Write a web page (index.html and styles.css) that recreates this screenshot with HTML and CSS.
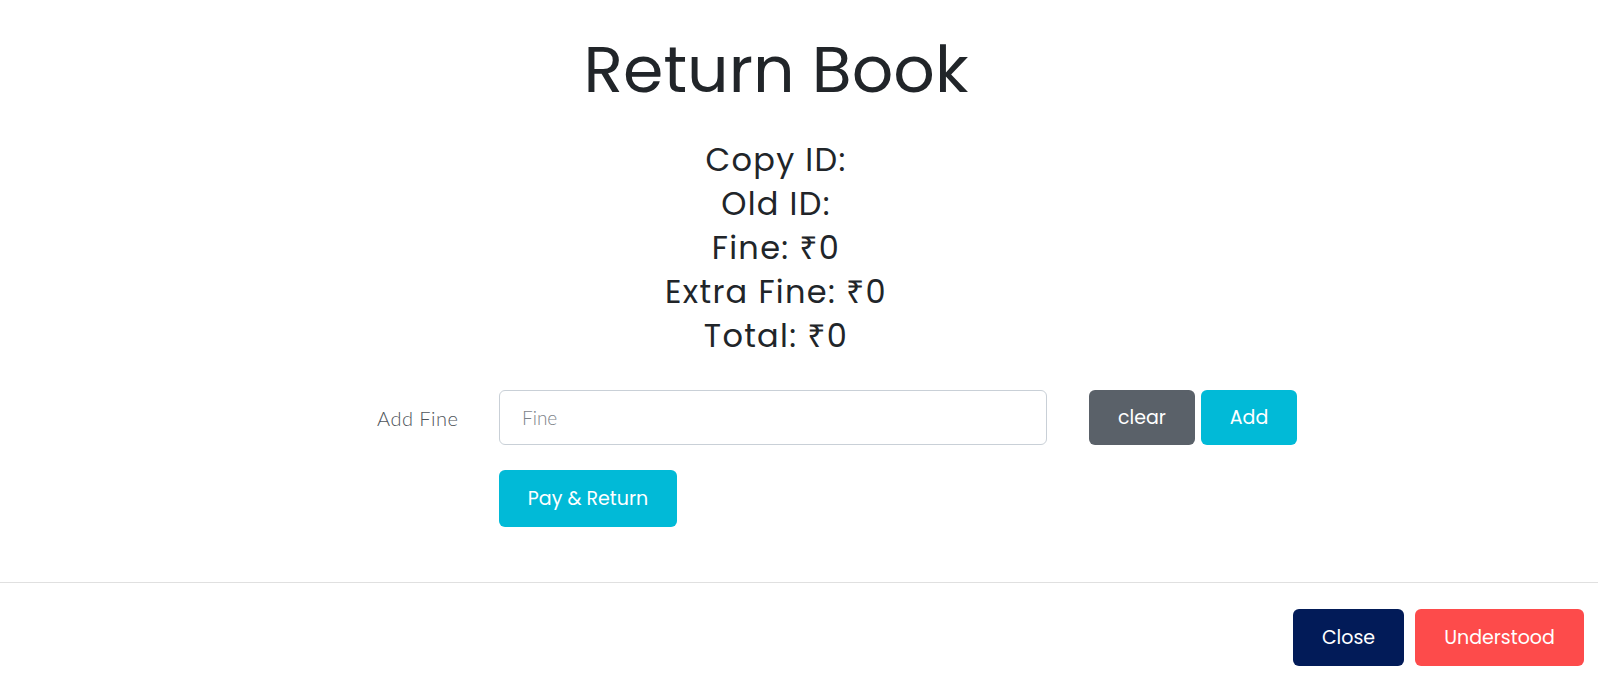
FILE: index.html
```html
<!DOCTYPE html>
<html lang="en">
<head>
<meta charset="utf-8">
<title>Return Book</title>
<link rel="stylesheet" href="styles.css">
</head>
<body>
<div class="modal">
  <div class="modal-body">
    <h1 class="title">Return Book</h1>
    <div class="info">
      <div class="info-line">Copy ID:</div>
      <div class="info-line">Old ID:</div>
      <div class="info-line">Fine: <span class="rupee">₹</span>0</div>
      <div class="info-line">Extra Fine: <span class="rupee">₹</span>0</div>
      <div class="info-line">Total: <span class="rupee">₹</span>0</div>
    </div>
    <form class="fine-form">
      <label class="fine-label" for="fine">Add Fine</label>
      <input class="fine-input" id="fine" type="text" placeholder="Fine">
      <div class="fine-actions">
        <button type="button" class="btn btn-clear">clear</button>
        <button type="button" class="btn btn-add">Add</button>
      </div>
      <div class="pay-cell">
        <button type="button" class="btn btn-pay">Pay &amp; Return</button>
      </div>
    </form>
  </div>
  <div class="modal-footer">
    <button type="button" class="btn btn-close">Close</button>
    <button type="button" class="btn btn-understood">Understood</button>
  </div>
</div>
</body>
</html>
```
FILE: styles.css
```css
* { box-sizing: border-box; }

html, body {
  margin: 0;
  padding: 0;
  background: #ffffff;
}

body {
  font-family: "Poppins", "Inter", "Noto Sans", "DejaVu Sans", sans-serif;
  color: #212529;
  width: 1598px;
  height: 680px;
  overflow: hidden;
}

.modal {
  display: flex;
  flex-direction: column;
}

.modal-body {
  padding: 32px 46px 55px 0;
}

.title {
  margin: 0;
  font-size: 65px;
  font-weight: 400;
  line-height: 76px;
  text-align: center;
}

.info {
  margin-top: 30px;
  text-align: center;
}

.info-line {
  height: 44px;
  font-size: 32px;
  font-weight: 400;
  line-height: 44px;
  letter-spacing: 1.3px;
}

.rupee {
  font-family: "Noto Sans", "DejaVu Sans", sans-serif;
  font-weight: 400;
  line-height: 0;
}

.fine-form {
  margin: 32px 0 0 377px;
  display: grid;
  grid-template-columns: 122px 548px auto;
  column-gap: 0;
  row-gap: 25px;
  align-items: center;
}

.fine-label {
  font-family: "Lato", "Open Sans", sans-serif;
  font-weight: 300;
  font-size: 20px;
  color: #4f555b;
  letter-spacing: 0.5px;
}

.fine-input {
  height: 55px;
  width: 548px;
  border: 1px solid #c9d0d7;
  border-radius: 6px;
  padding: 0 22px;
  font-family: "Lato", "Open Sans", sans-serif;
  font-weight: 300;
  font-size: 19px;
  color: #495057;
  outline: none;
}

.fine-input::placeholder {
  color: #7d838a;
}

.fine-actions {
  display: flex;
  gap: 6px;
  padding-left: 42px;
}

.pay-cell {
  grid-column: 2;
}

.btn {
  border: none;
  border-radius: 6px;
  color: #ffffff;
  font-family: "Poppins", "Inter", sans-serif;
  font-size: 19px;
  font-weight: 400;
  cursor: pointer;
  padding: 0;
}

.btn-clear {
  background: #5a6169;
  width: 106px;
  height: 55px;
}

.btn-add {
  background: #01bad7;
  width: 96px;
  height: 55px;
}

.btn-pay {
  background: #01bad7;
  width: 178px;
  height: 57px;
}

.modal-footer {
  border-top: 1px solid #e0e0e0;
  display: flex;
  justify-content: flex-end;
  gap: 11px;
  padding: 26px 14px 0 0;
}

.btn-close {
  background: #021b58;
  width: 111px;
  height: 57px;
}

.btn-understood {
  background: #fd4b4b;
  width: 169px;
  height: 57px;
}
```
